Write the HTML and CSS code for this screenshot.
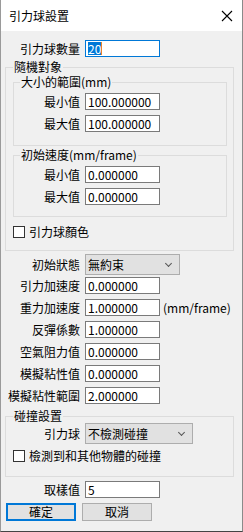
FILE: index.html
```html
<!DOCTYPE html>
<html lang="zh-Hant">
<head>
    <meta charset="UTF-8">
    <meta name="viewport" content="width=device-width, initial-scale=1.0">
    <title>引力球設置</title>
    <link rel="stylesheet" href="styles.css">
</head>
<body>
    <div class="dialog">
        <div class="titlebar">
            <span class="title">引力球設置</span>
            <svg class="close" width="12" height="12" viewBox="0 0 12 12">
                <path d="M1 1 L11 11 M11 1 L1 11" stroke="#000" stroke-width="1.1" fill="none"/>
            </svg>
        </div>

        <div class="content">
            <div class="row">
                <span class="lbl">引力球數量</span>
                <div class="field focus"><span class="sel">20</span><span class="caret"></span></div>
            </div>

            <!-- 隨機對象 -->
            <fieldset class="group outer">
                <legend>隨機對象</legend>

                <fieldset class="group inner size">
                    <legend>大小的範圍(mm)</legend>
                    <div class="row">
                        <span class="lbl">最小值</span>
                        <div class="field">100.000000</div>
                    </div>
                    <div class="row">
                        <span class="lbl">最大值</span>
                        <div class="field">100.000000</div>
                    </div>
                </fieldset>

                <fieldset class="group inner speed">
                    <legend>初始速度(mm/frame)</legend>
                    <div class="row">
                        <span class="lbl">最小值</span>
                        <div class="field">0.000000</div>
                    </div>
                    <div class="row">
                        <span class="lbl">最大值</span>
                        <div class="field">0.000000</div>
                    </div>
                </fieldset>

                <label class="check color-check"><span class="box"></span>引力球顏色</label>
            </fieldset>

            <div class="row combo-row">
                <span class="lbl">初始狀態</span>
                <div class="combo">無約束<span class="chevron"></span></div>
            </div>
            <div class="row">
                <span class="lbl">引力加速度</span>
                <div class="field">0.000000</div>
            </div>
            <div class="row">
                <span class="lbl">重力加速度</span>
                <div class="field">1.000000</div>
                <span class="unit">(mm/frame)</span>
            </div>
            <div class="row">
                <span class="lbl">反彈係數</span>
                <div class="field">1.000000</div>
            </div>
            <div class="row">
                <span class="lbl">空氣阻力值</span>
                <div class="field">0.000000</div>
            </div>
            <div class="row">
                <span class="lbl">模擬粘性值</span>
                <div class="field">0.000000</div>
            </div>
            <div class="row">
                <span class="lbl">模擬粘性範圍</span>
                <div class="field">2.000000</div>
            </div>

            <!-- 碰撞設置 -->
            <fieldset class="group collide">
                <legend>碰撞設置</legend>
                <div class="row combo-row">
                    <span class="lbl">引力球</span>
                    <div class="combo wide">不檢測碰撞<span class="chevron"></span></div>
                </div>
                <label class="check"><span class="box"></span>檢測到和其他物體的碰撞</label>
            </fieldset>

            <div class="row sample">
                <span class="lbl">取樣值</span>
                <div class="field">5</div>
            </div>

            <div class="buttons">
                <button class="btn default">確定</button>
                <button class="btn">取消</button>
            </div>
        </div>
    </div>
</body>
</html>
```

FILE: styles.css
```css
* {
    margin: 0;
    padding: 0;
    box-sizing: border-box;
    font-family: "Noto Sans CJK TC", "Noto Sans", sans-serif;
}

body {
    background: #f0f0f0;
}

.dialog {
    width: 243px;
    height: 532px;
    background: #f0f0f0;
    border-left: 1px solid #9a9a9a;
    border-right: 1px solid #8a8a8a;
    border-bottom: 1px solid #444;
    font-size: 12px;
    color: #000;
}

.titlebar {
    height: 31px;
    background: #fff;
    display: flex;
    align-items: center;
    justify-content: space-between;
    padding: 0 9px 0 8px;
}

.title {
    font-size: 12px;
    line-height: 15px;
}

.content {
    padding: 9px 0 0 4px;
}

/* rows */
.row {
    display: flex;
    align-items: center;
    height: 17px;
    margin-top: 5px;
}

.content > .row:first-child {
    margin-top: 0;
}

.lbl {
    width: 75px;
    margin-right: 5px;
    text-align: right;
    white-space: nowrap;
    line-height: 15px;
}

.field {
    width: 75px;
    height: 17px;
    background: #fff;
    border: 1px solid #7a7a7a;
    padding-left: 2px;
    line-height: 15px;
    white-space: nowrap;
    display: flex;
    align-items: center;
}

.field.focus {
    border-color: #0078d7;
}

.sel {
    background: #0078d7;
    color: #fff;
    line-height: 13px;
}

.caret {
    width: 1px;
    height: 13px;
    background: #e8832a;
}

.unit {
    margin-left: 3px;
    line-height: 15px;
}

/* groups */
.group {
    border: 1px solid #dcdcdc;
    min-width: 0;
}

.group legend {
    line-height: 14px;
    padding: 0 1px;
    margin-left: 0;
}

.outer {
    width: 229px;
    margin-top: 3px;
    padding: 0 6px 11px 7px;
}

.outer .lbl,
.collide .lbl {
    width: 67px;
}

.inner {
    padding: 0 6px 0 6px;
}

.inner .lbl {
    width: 60px;
}

.inner .row:first-of-type {
    margin-top: 4px;
}

.size {
    margin-top: 1px;
    padding-bottom: 13px;
}

.speed {
    margin-top: 2px;
    padding-bottom: 11px;
}

.check {
    display: flex;
    align-items: center;
    line-height: 15px;
    height: 15px;
}

.color-check {
    margin-top: 7px;
}

.box {
    width: 12px;
    height: 12px;
    border: 1px solid #333;
    background: #fff;
    margin-right: 4px;
}

/* combo boxes */
.combo-row {
    height: 21px;
}

.content > .combo-row {
    margin-top: 3px;
}

.combo {
    width: 95px;
    height: 21px;
    background: #e1e1e1;
    border: 1px solid #adadad;
    padding-left: 2px;
    display: flex;
    align-items: center;
    justify-content: space-between;
    line-height: 15px;
}

.combo.wide {
    width: 108px;
}

.chevron {
    width: 5px;
    height: 5px;
    border-right: 1px solid #555;
    border-bottom: 1px solid #555;
    transform: rotate(45deg);
    margin: 0 8px 3px 0;
}

.content > .combo-row + .row {
    margin-top: 2px;
}

.collide {
    width: 229px;
    margin-top: 5px;
    padding: 0 6px 13px 7px;
}

.collide .combo-row {
    margin-top: 0;
}

.collide .check {
    margin-top: 4px;
}

.sample {
    margin-top: 4px;
}

/* buttons */
.buttons {
    display: flex;
    gap: 6px;
    margin: 5px 0 0 1px;
}

.btn {
    width: 70px;
    height: 18px;
    background: #e1e1e1;
    border: 1px solid #adadad;
    font-size: 12px;
    line-height: 14px;
    color: #000;
}

.btn.default {
    border: 2px solid #0078d7;
}
```
